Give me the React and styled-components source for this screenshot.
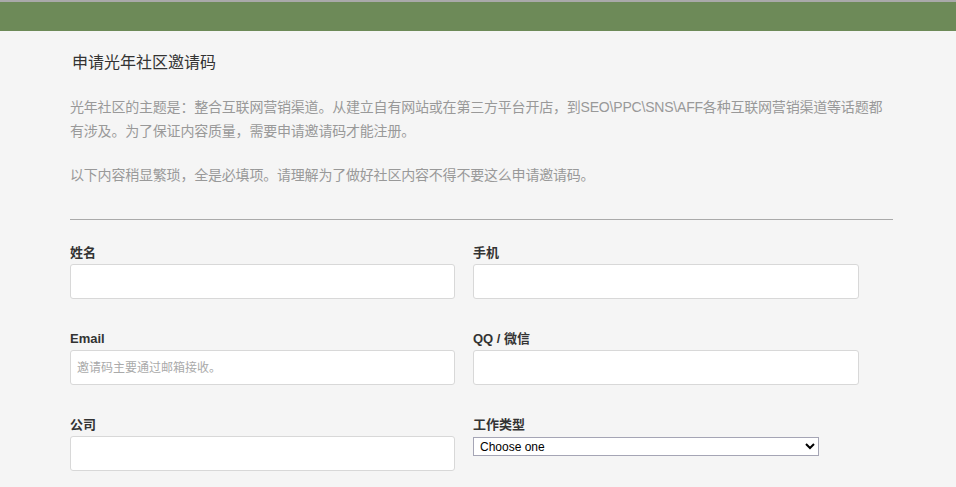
import React from "react";
import styled, { createGlobalStyle } from "styled-components";

const Global = createGlobalStyle`
  body { margin: 0; background: #f5f5f5; font-family: "Liberation Sans", "Noto Sans CJK SC", sans-serif; }
`;

const TopBar = styled.div`
  height: 29px;
  background: #6d8a58;
  border-top: 2px solid #a9a9a9;
`;

const Main = styled.div`
  padding: 0 63px 0 70px;
`;

const Title = styled.h1`
  margin: 20px 0 0 2px;
  font-size: 16px;
  font-weight: normal;
  color: #333;
  line-height: 24px;
`;

const Para = styled.p`
  margin: ${(p) => p.$top}px 0 0;
  font-size: 14px;
  line-height: 24px;
  letter-spacing: -0.2px;
  color: #999;
`;

const Rule = styled.hr`
  margin: 32px 0 0;
  border: 0;
  border-top: 1px solid #aaa;
`;

const Grid = styled.div`
  display: grid;
  grid-template-columns: 385px 386px;
  column-gap: 18px;
  row-gap: 31px;
  margin-top: 24px;
`;

const Field = styled.div`
  display: flex;
  flex-direction: column;
`;

const Label = styled.label`
  font-size: 13px;
  font-weight: bold;
  color: #333;
  height: 20px;
  line-height: 18px;
`;

const Input = styled.input`
  box-sizing: border-box;
  height: 35px;
  width: 100%;
  border: 1px solid #d8d8d8;
  border-radius: 3px;
  background: #fff;
  padding: 0 6px;
  font-size: 12px;
  font-family: inherit;
  &::placeholder { color: #aaa; }
`;

const Select = styled.select`
  width: 346px;
  height: 19px;
  margin-top: 1px;
  font-size: 12px;
  font-family: inherit;
  border: 1px solid #a5a5b5;
  background: #fff;
  padding: 0 2px;
`;

export default function App() {
  return (
    <>
      <Global />
      <TopBar />
      <Main>
        <Title>申请光年社区邀请码</Title>
        <Para $top={20}>
          光年社区的主题是：整合互联网营销渠道。从建立自有网站或在第三方平台开店，到SEO\PPC\SNS\AFF各种互联网营销渠道等话题都有涉及。为了保证内容质量，需要申请邀请码才能注册。
        </Para>
        <Para $top={20}>以下内容稍显繁琐，全是必填项。请理解为了做好社区内容不得不要这么申请邀请码。</Para>
        <Rule />
        <Grid>
          <Field><Label>姓名</Label><Input /></Field>
          <Field><Label>手机</Label><Input /></Field>
          <Field><Label>Email</Label><Input placeholder="邀请码主要通过邮箱接收。" /></Field>
          <Field><Label>QQ / 微信</Label><Input /></Field>
          <Field><Label>公司</Label><Input /></Field>
          <Field>
            <Label>工作类型</Label>
            <Select defaultValue="">
              <option value="">Choose one</option>
            </Select>
          </Field>
        </Grid>
      </Main>
    </>
  );
}
